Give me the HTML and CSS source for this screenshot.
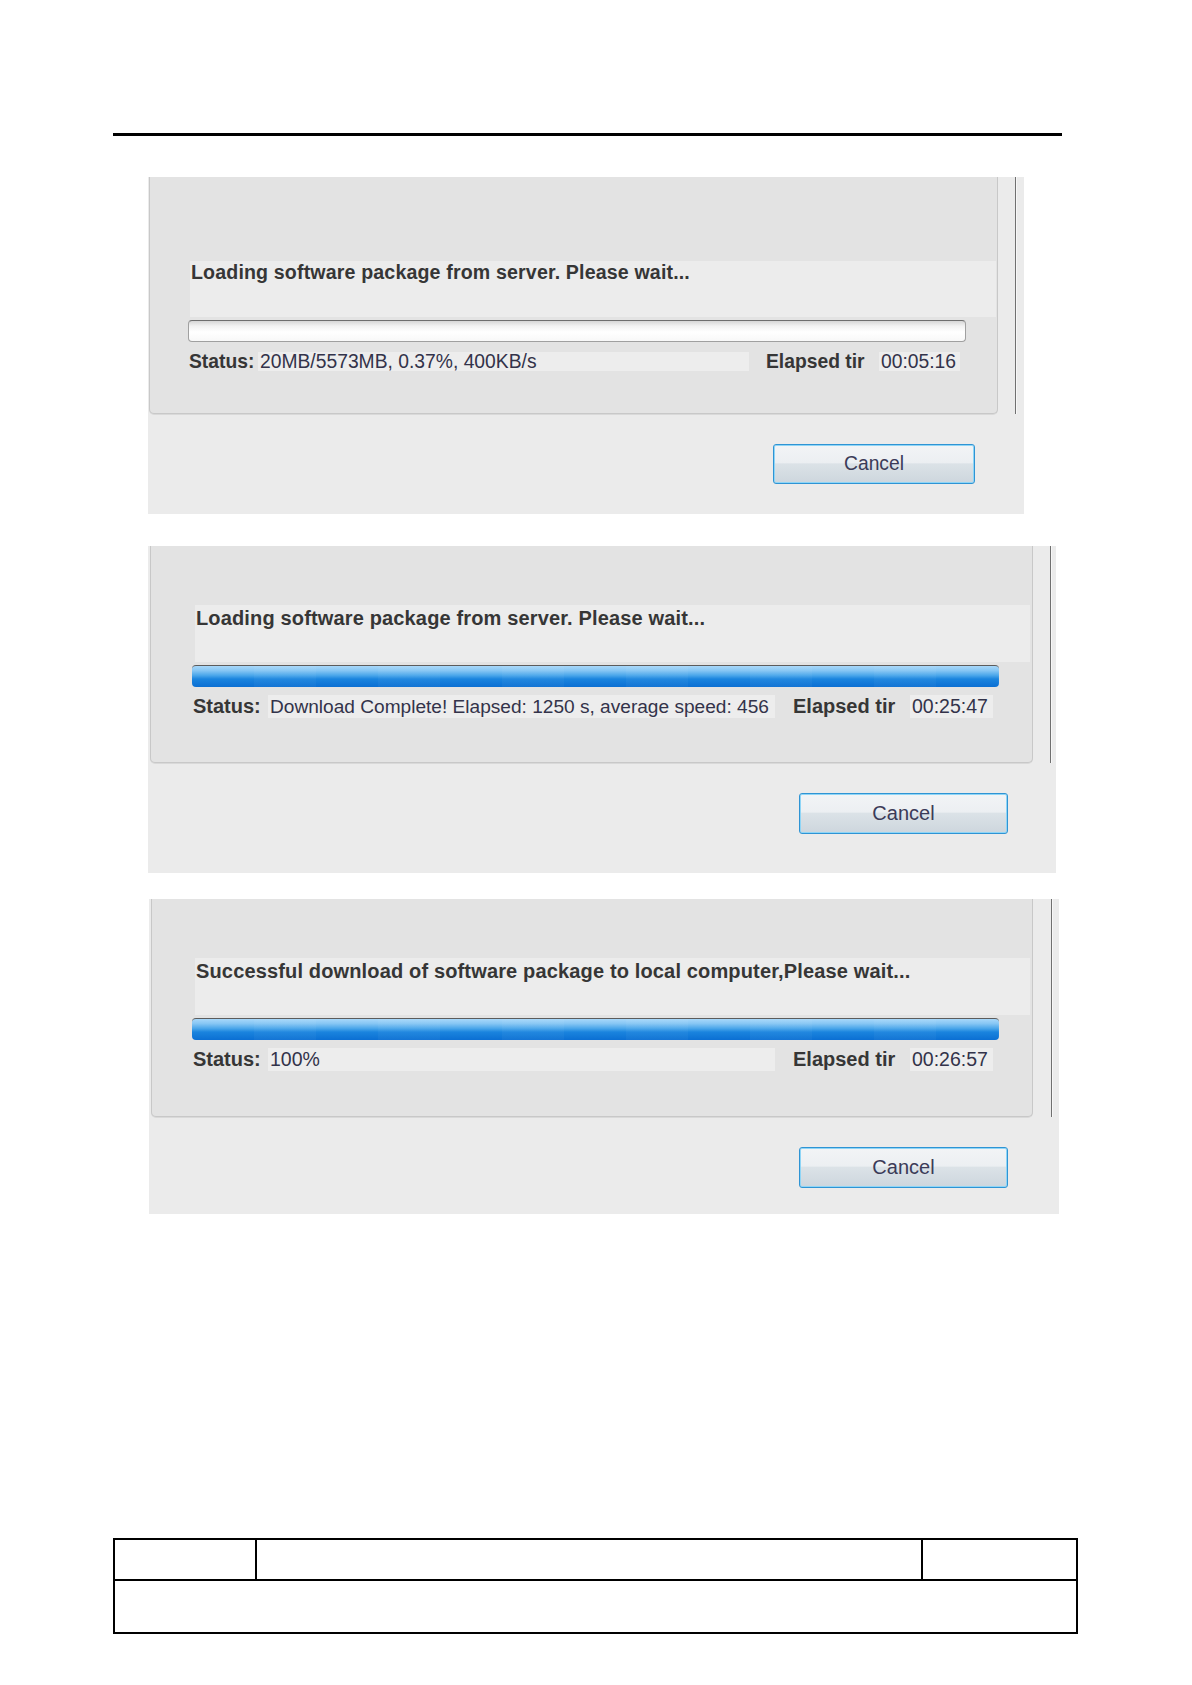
FILE: index.html
```html
<!DOCTYPE html>
<html>
<head>
    <title>Software package download</title>
    <link rel="stylesheet" href="styles.css">
</head>
<body>
    <div class="rule"></div>

    <!-- passo 1: carregando -->
    <div class="dialog dialog-1">
        <div class="top">
            <div class="group">
                <div class="message">Loading software package from server. Please wait...</div>
                <div class="progress empty"></div>
                <div class="status">
                    <span class="label">Status:</span>
                    <span class="value">20MB/5573MB, 0.37%, 400KB/s</span>
                    <span class="label elapsed">Elapsed tir</span>
                    <span class="value time">00:05:16</span>
                </div>
            </div>
            <div class="divider"></div>
        </div>
        <div class="actions">
            <button class="cancel">Cancel</button>
        </div>
    </div>

    <!-- passo 2: download completo -->
    <div class="dialog dialog-2">
        <div class="top">
            <div class="group">
                <div class="message">Loading software package from server. Please wait...</div>
                <div class="progress full"></div>
                <div class="status">
                    <span class="label">Status:</span>
                    <span class="value long">Download Complete! Elapsed: 1250 s, average speed: 456</span>
                    <span class="label elapsed">Elapsed tir</span>
                    <span class="value time">00:25:47</span>
                </div>
            </div>
            <div class="divider"></div>
        </div>
        <div class="actions">
            <button class="cancel">Cancel</button>
        </div>
    </div>

    <!-- passo 3: copiado para o computador local -->
    <div class="dialog dialog-3">
        <div class="top">
            <div class="group">
                <div class="message">Successful download of software package to local computer,Please wait...</div>
                <div class="progress full"></div>
                <div class="status">
                    <span class="label">Status:</span>
                    <span class="value">100%</span>
                    <span class="label elapsed">Elapsed tir</span>
                    <span class="value time">00:26:57</span>
                </div>
            </div>
            <div class="divider"></div>
        </div>
        <div class="actions">
            <button class="cancel">Cancel</button>
        </div>
    </div>

    <div class="footer">
        <div class="footer-row">
            <div class="cell first"></div>
            <div class="cell middle"></div>
            <div class="cell last"></div>
        </div>
        <div class="footer-row bottom"></div>
    </div>
</body>
</html>
```
FILE: styles.css
```css
body {
    margin: 0;
    background-color: #fff;
    font-family: "Liberation Sans", Arial, sans-serif;
    font-size: 20px;
    color: #333;
}
.rule {
    margin: 133px 0 0 113px;
    width: 949px;
    border-top: 3px solid #000;
}

/* janela de download */
.dialog {
    background-color: #ebebeb;
    box-sizing: border-box;
}
.dialog-1 {
    margin: 41px 0 0 148px;
    width: 876px;
    height: 337px;
    font-size: 19.3px;
}
.dialog-2 {
    margin: 32px 0 0 148px;
    width: 908px;
    height: 327px;
}
.dialog-3 {
    margin: 26px 0 0 149px;
    width: 910px;
    height: 315px;
}
.top {
    display: flex;
}
.group {
    box-sizing: border-box;
    background-color: #e3e3e3;
    border: 1px solid #c8c8c8;
    border-top: 0;
    border-radius: 0 0 5px 5px;
    box-shadow: 0 1px 0 #d9d9d9;
}
.dialog-1 .group {
    margin-left: 1px;
    width: 849px;
    height: 237px;
    padding-top: 84px;
}
.dialog-2 .group {
    margin-left: 2px;
    width: 883px;
    height: 217px;
    padding-top: 59px;
}
.dialog-3 .group {
    margin-left: 2px;
    width: 882px;
    height: 218px;
    padding-top: 59px;
}
.divider {
    width: 1px;
    background-color: #707070;
    box-shadow: 1px 0 0 #f7f7f7;
    margin-left: 17px;
}
.dialog-3 .divider {
    margin-left: 18px;
}

/* mensagem */
.message {
    box-sizing: border-box;
    background-color: #ececec;
    font-weight: bold;
    line-height: 1;
    letter-spacing: 0.15px;
    white-space: nowrap;
    padding: 3px 0 0 1px;
    color: #363636;
}
.dialog-1 .message {
    margin-left: 40px;
    width: 806px;
    height: 56px;
    font-size: 19.6px;
    padding-top: 2px;
}
.dialog-2 .message {
    margin-left: 44px;
    width: 835px;
    height: 57px;
}
.dialog-3 .message {
    margin-left: 43px;
    width: 835px;
    height: 57px;
}

/* barra de progresso */
.progress {
    box-sizing: border-box;
    margin-top: 3px;
    height: 22px;
    border-radius: 4px;
}
.progress.empty {
    border: 1px solid #a0a0a0;
    border-top-color: #6e6e6e;
    background: linear-gradient(#d6d6d6 0%, #f2f2f2 25%, #fff 55%, #f8f8f8 100%);
}
.progress.full {
    border-top: 1px solid #5c5c5c;
    background:
        repeating-linear-gradient(90deg, rgba(255,255,255,0) 0, rgba(255,255,255,0) 62px, rgba(255,255,255,0.035) 62px, rgba(255,255,255,0.035) 124px),
        linear-gradient(#a8d8fa 0%, #86c6f4 22%, #4aa6ea 45%, #1a84de 62%, #0b6fd3 100%);
}
.dialog-1 .progress {
    margin-left: 38px;
    width: 778px;
}
.dialog-2 .progress {
    margin-left: 41px;
    width: 807px;
}
.dialog-3 .progress {
    margin-left: 40px;
    width: 807px;
}

/* linha de status */
.status {
    display: flex;
    white-space: nowrap;
}
.status .label {
    font-weight: bold;
    color: #363636;
}
.status .value {
    background-color: #ededed;
    padding-left: 2px;
    box-sizing: border-box;
    overflow: hidden;
    color: #33334a;
}
.dialog-1 .status {
    margin: 10px 0 0 39px;
    line-height: 19px;
}
.dialog-1 .label { width: 69px; }
.dialog-1 .value { width: 491px; }
.dialog-1 .elapsed { margin-left: 17px; width: 113px; }
.dialog-1 .time { width: 81px; }

.dialog-2 .status,
.dialog-3 .status {
    margin-top: 8px;
    line-height: 23px;
}
.dialog-2 .status { margin-left: 42px; }
.dialog-3 .status { margin-left: 41px; }
.dialog-2 .label,
.dialog-3 .label { width: 75px; }
.dialog-2 .value,
.dialog-3 .value { width: 507px; font-size: 19.5px; }
.dialog-2 .value.long { font-size: 19.1px; }
.dialog-2 .elapsed,
.dialog-3 .elapsed { margin-left: 18px; width: 117px; }
.dialog-2 .time,
.dialog-3 .time { width: 83px; }

/* botao cancelar */
.actions {
    display: flex;
    justify-content: flex-end;
    margin-top: 30px;
}
.cancel {
    box-sizing: border-box;
    font-family: "Liberation Sans", Arial, sans-serif;
    font-size: 20px;
    color: #3b3b58;
    border: 1px solid #2f94d4;
    border-radius: 3px;
    box-shadow: inset 0 0 0 1px #8fd5f6;
    background: linear-gradient(#f2f4f6 0%, #eceff2 46%, #dbe2e7 50%, #cdd6dd 100%);
    padding: 0;
}
.dialog-1 .actions { padding-right: 49px; }
.dialog-1 .cancel { width: 202px; height: 40px; font-size: 19.3px; }
.dialog-2 .actions { padding-right: 48px; }
.dialog-3 .actions { padding-right: 51px; }
.dialog-2 .cancel,
.dialog-3 .cancel { width: 209px; height: 41px; }

/* tabela do rodape */
.footer {
    margin: 324px 0 0 113px;
    width: 965px;
    border: 2px solid #000;
    box-sizing: border-box;
}
.footer-row {
    display: flex;
    height: 41px;
    border-bottom: 2px solid #000;
    box-sizing: border-box;
}
.footer-row.bottom {
    height: 51px;
    border-bottom: 0;
}
.cell {
    box-sizing: border-box;
}
.cell.first {
    width: 142px;
    border-right: 2px solid #000;
}
.cell.middle {
    width: 666px;
    border-right: 2px solid #000;
}
.cell.last {
    flex: 1;
}
```
